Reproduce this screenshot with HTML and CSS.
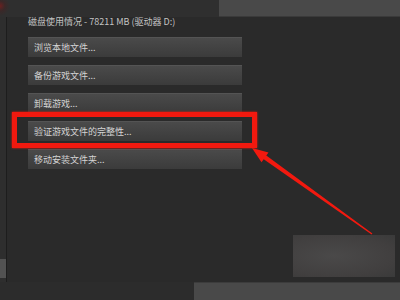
FILE: index.html
```html
<!DOCTYPE html>
<html lang="zh-CN">
<head>
  <meta charset="UTF-8" />
  <title>属性 - 本地文件</title>
  <link rel="stylesheet" href="styles.css">
</head>
<body>
  <div class="topbar">
    <div class="top-left"></div>
    <div class="top-right"></div>
  </div>

  <div class="middle">
    <div class="side">
      <div class="side-tab"></div>
    </div>
    <div class="panel">
      <div class="usage">磁盘使用情况 - 78211 MB (驱动器 D:)</div>
      <div class="actions">
        <button class="action">浏览本地文件...</button>
        <button class="action">备份游戏文件...</button>
        <button class="action">卸载游戏...</button>
        <button class="action">验证游戏文件的完整性...</button>
        <button class="action">移动安装文件夹...</button>
      </div>
      <div class="ghost"></div>
    </div>
  </div>

  <div class="bottombar">
    <div class="bottom-left"></div>
    <div class="bottom-right"></div>
  </div>

  <!-- annotation drawn over the screenshot -->
  <div class="mark-box"></div>
  <svg class="mark-arrow" width="400" height="300" viewBox="0 0 400 300">
    <polygon fill="#f2190f"
      points="252,148 268.5,152.5 266.3,155.6 372.4,233.5 371.6,234.5 263.7,159.2 261.5,162.3" />
  </svg>
</body>
</html>
```

FILE: styles.css
```css
html, body {
  margin: 0;
  padding: 0;
}
body {
  width: 400px;
  height: 300px;
  overflow: hidden;
  position: relative;
  background: #2c2c2c;
  font-family: "Noto Sans CJK SC", "Noto Sans", sans-serif;
  color: #d0d0d0;
}
.topbar {
  display: flex;
  height: 17px;
}
.top-left {
  width: 219px;
  background: radial-gradient(circle at 0 6px, #6a2020 0, #3a2828 5px, #2f2f2f 10px);
}
.top-right {
  flex: 1;
  background: #494949;
  border-bottom: 1px solid #3a3a3a;
}
.middle {
  display: flex;
  height: 265px;
}
.side {
  width: 7px;
  background: #2e2e2e;
  border-right: 1px solid #1d1d1d;
  display: flex;
  flex-direction: column;
  justify-content: flex-end;
  padding-bottom: 4px;
  box-sizing: border-box;
}
.side-tab {
  height: 19px;
  background: #525252;
}
.panel {
  flex: 1;
  background: #2a2a2a;
  padding-left: 21px;
  display: flex;
  flex-direction: column;
}
.usage {
  font-size: 9px;
  line-height: 10px;
  color: #c4c4c4;
  white-space: nowrap;
}
.actions {
  margin-top: 10px;
  display: flex;
  flex-direction: column;
  gap: 8px;
  width: 214px;
}
.action {
  height: 20px;
  padding: 0 0 0 6px;
  border: none;
  border-top: 1px solid #545454;
  background: linear-gradient(#4a4a4a, #3b3b3b);
  color: #d4d4d4;
  font-family: inherit;
  font-size: 9px;
  line-height: 19px;
  text-align: left;
}
.ghost {
  margin-top: 66px;
  margin-left: auto;
  margin-right: 5px;
  width: 102px;
  height: 42px;
  background: radial-gradient(ellipse at 40% 50%, #4a4949 0, #413f3f 70%, #3a3a3a 100%);
}
.bottombar {
  display: flex;
  height: 18px;
}
.bottom-left {
  width: 194px;
  background: #2c2c2c;
}
.bottom-right {
  flex: 1;
  background: #494949;
  border-top: 1px solid #3c3c3c;
}
.mark-box {
  position: absolute;
  left: 12px;
  top: 112px;
  width: 235px;
  height: 26px;
  border: 5px solid #f2190f;
  box-shadow: 0 0 2px #f2190f;
}
.mark-arrow {
  position: absolute;
  left: 0;
  top: 0;
  pointer-events: none;
}
```
